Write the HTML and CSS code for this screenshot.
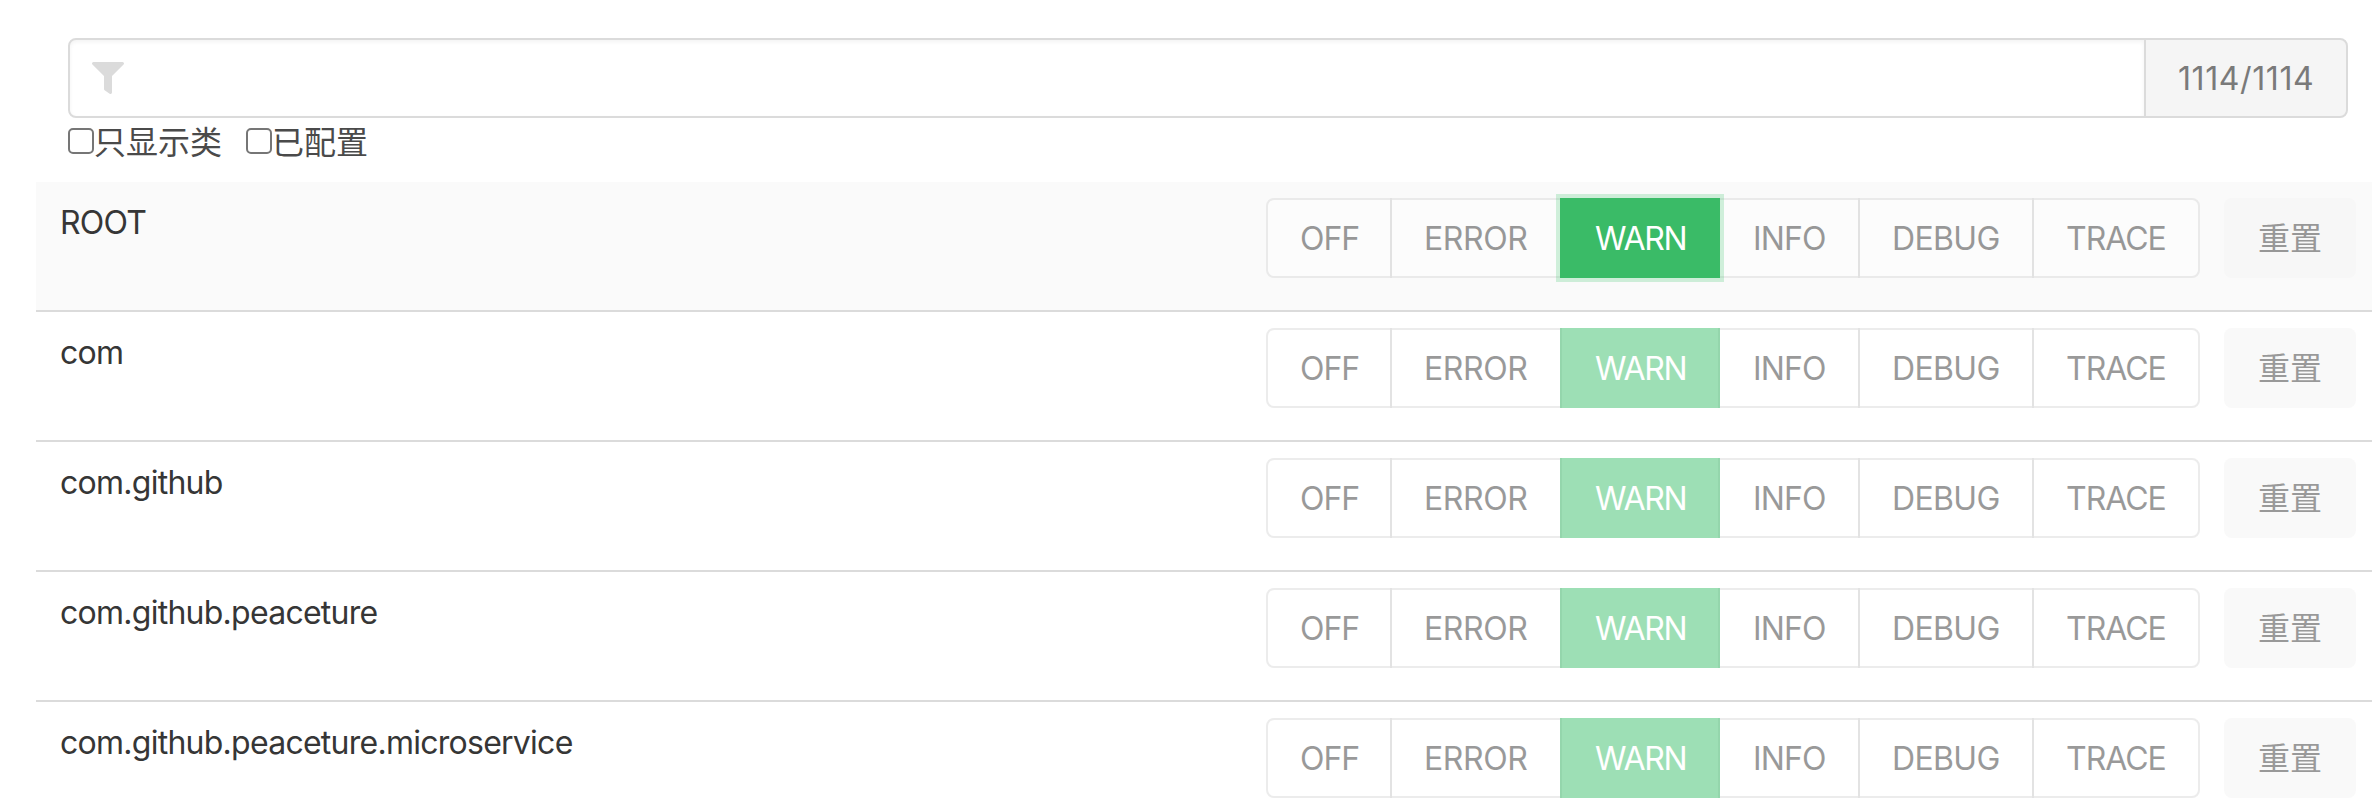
FILE: index.html
```html
<!DOCTYPE html>
<html lang="zh">
<head>
<meta charset="utf-8">
<title>Loggers</title>
<link rel="stylesheet" href="styles.css">
</head>
<body>
<div class="filter">
  <div class="search">
    <svg class="search-icon" viewBox="0 0 512 512"><path fill="currentColor" d="M487.976 0H24.028C2.71 0-8.047 25.866 7.058 40.971L192 225.941V432c0 7.831 3.821 15.17 10.237 19.662l80 55.98C298.02 518.69 320 507.493 320 487.98V225.941l184.947-184.97C520.021 25.896 509.338 0 487.976 0z"/></svg>
  </div>
  <div class="count">1114/1114</div>
</div>
<div class="options">
  <label class="option"><input class="check" type="checkbox">只显示类</label>
  <label class="option"><input class="check" type="checkbox">已配置</label>
</div>
<div class="loggers">
  <div class="row is-hovered">
    <div class="name">ROOT</div>
    <div class="levels"><button class="btn off">OFF</button><button class="btn error">ERROR</button><button class="btn warn is-focused">WARN</button><button class="btn info">INFO</button><button class="btn debug">DEBUG</button><button class="btn trace">TRACE</button></div>
    <button class="btn reset">重置</button>
  </div>
  <div class="row">
    <div class="name">com</div>
    <div class="levels"><button class="btn off">OFF</button><button class="btn error">ERROR</button><button class="btn warn">WARN</button><button class="btn info">INFO</button><button class="btn debug">DEBUG</button><button class="btn trace">TRACE</button></div>
    <button class="btn reset">重置</button>
  </div>
  <div class="row">
    <div class="name">com.github</div>
    <div class="levels"><button class="btn off">OFF</button><button class="btn error">ERROR</button><button class="btn warn">WARN</button><button class="btn info">INFO</button><button class="btn debug">DEBUG</button><button class="btn trace">TRACE</button></div>
    <button class="btn reset">重置</button>
  </div>
  <div class="row">
    <div class="name">com.github.peaceture</div>
    <div class="levels"><button class="btn off">OFF</button><button class="btn error">ERROR</button><button class="btn warn">WARN</button><button class="btn info">INFO</button><button class="btn debug">DEBUG</button><button class="btn trace">TRACE</button></div>
    <button class="btn reset">重置</button>
  </div>
  <div class="row">
    <div class="name">com.github.peaceture.microservice</div>
    <div class="levels"><button class="btn off">OFF</button><button class="btn error">ERROR</button><button class="btn warn">WARN</button><button class="btn info">INFO</button><button class="btn debug">DEBUG</button><button class="btn trace">TRACE</button></div>
    <button class="btn reset">重置</button>
  </div>
</div>
</body>
</html>
```
FILE: styles.css
```css
* { box-sizing: border-box; }
html { overflow: hidden; }
body {
  margin: 0;
  padding-top: 38px;
  height: 812px;
  overflow: hidden;
  background: #fff;
  color: #4a4a4a;
  font: 32px/48px Inter, "Noto Sans CJK SC", sans-serif;
}
.filter {
  display: flex;
  height: 80px;
  margin: 0 24px 0 68px;
}
.search {
  flex: 1;
  display: flex;
  padding: 22px;
  border: 2px solid #dbdbdb;
  border-radius: 8px 0 0 8px;
  box-shadow: inset 0 2px 4px rgba(10, 10, 10, .05);
}
.search-icon { width: 32px; height: 32px; color: #dbdbdb; }
.count {
  width: 204px;
  margin-left: -2px;
  padding: 15px 0 0 32px;
  border: 2px solid #dbdbdb;
  border-radius: 0 8px 8px 0;
  background: #f5f5f5;
  color: #7a7a7a;
  letter-spacing: .6px;
}
.options {
  display: flex;
  gap: 24px;
  height: 64px;
  padding: 1px 0 0 68px;
}
.option { display: flex; }
.check {
  appearance: none;
  width: 26px;
  height: 26px;
  margin: 9px 0 0;
  border: 2px solid #767676;
  border-radius: 5px;
  background: #fff;
}
.loggers { margin-left: 36px; }
.row {
  display: flex;
  height: 130px;
  padding: 16px 16px 0 24px;
  border-bottom: 2px solid #dbdbdb;
}
.is-hovered { background: #fafafa; }
.name { flex: 1; padding-top: 1px; color: #363636; letter-spacing: -.74px; }
.levels { display: flex; margin-right: 24px; }
.btn {
  height: 80px;
  margin: 0 0 0 -2px;
  padding: 2px 0 0 32px;
  border: 2px solid #dbdbdb;
  border-radius: 0;
  background: #fff;
  color: #363636;
  font: inherit;
  text-align: left;
  opacity: .5;
}
.off { width: 126px; margin-left: 0; border-radius: 8px 0 0 8px; letter-spacing: -1px; }
.error { width: 172px; letter-spacing: -.4px; }
.warn {
  z-index: 1;
  width: 160px;
  padding-left: 33px;
  border-color: transparent;
  background: #3ec16d;
  color: #fff;
  letter-spacing: -1.3px;
}
.info { width: 142px; padding-left: 33px; letter-spacing: -.9px; }
.debug { width: 176px; letter-spacing: -.65px; }
.trace { width: 168px; border-radius: 0 8px 8px 0; letter-spacing: -1px; }
.is-focused {
  background: #3abb67;
  box-shadow: 0 0 0 4px rgba(72, 199, 116, .25);
  opacity: 1;
}
.reset {
  width: 132px;
  margin: 0;
  border-color: transparent;
  border-radius: 8px;
  background: #f5f5f5;
}
```
